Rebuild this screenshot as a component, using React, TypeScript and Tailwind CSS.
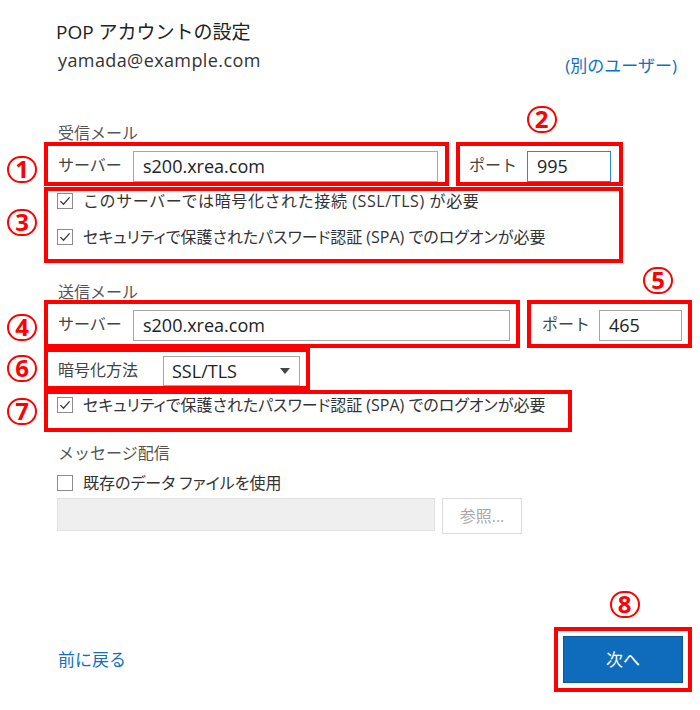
import React from "react";

const RED = "border-4 border-[#ff0000]";

// circled annotation number: a red ellipse with the digit inside
function Num({ n }: { n: string }) {
  return (
    <span className="inline-flex h-[28px] items-center">
      <span className="inline-flex items-center justify-center w-[30px] h-[27px] rounded-full border-2 border-[#ff0000] text-[#ff0000] text-[24px] leading-none font-bold font-['Noto_Sans',sans-serif]">
        {n}
      </span>
    </span>
  );
}

function Check({ checked }: { checked: boolean }) {
  return (
    <svg width="16" height="16" viewBox="0 0 16 16" className="shrink-0">
      <rect x="0.5" y="0.5" width="15" height="15" fill="#fff" stroke="#8c8c8c" />
      {checked && (
        <path d="M3.4 8.1 L6.5 11.3 L12.6 4.4" fill="none" stroke="#3a3a3a" strokeWidth="1.3" />
      )}
    </svg>
  );
}

// palt narrows kana the way the original UI font does; the first row reads wider there
function CheckRow({
  label,
  checked = true,
  palt = true,
}: {
  label: string;
  checked?: boolean;
  palt?: boolean;
}) {
  return (
    <div className="flex items-center h-[16px]">
      <Check checked={checked} />
      <span
        className={`ml-[10px] text-[16px] leading-[16px] text-[#333] whitespace-nowrap ${
          palt ? "[font-feature-settings:'palt']" : "tracking-[0.6px]"
        }`}
      >
        {label}
      </span>
    </div>
  );
}

function TextBox({ value, w, focus = false }: { value: string; w: string; focus?: boolean }) {
  return (
    <div
      className={`${w} h-[31px] flex items-center pl-[9px] bg-white border text-[18px] text-[#222] ${
        focus ? "border-[#2b88d8]" : "border-[#a6a6a6]"
      }`}
    >
      {value}
    </div>
  );
}

export default function App() {
  return (
    <div className="w-[700px] h-[710px] bg-white flex flex-col font-['Open_Sans','Noto_Sans_CJK_JP',sans-serif] text-[#333]">
      {/* header */}
      <div className="pl-[56px] pr-[23px] pt-[22px]">
        <h1 className="h-[20px] text-[19px] leading-[20px] text-[#222] whitespace-nowrap">
          POP アカウントの設定
        </h1>
        <div className="mt-[8px] flex justify-between items-start h-[26px]">
          <span className="pl-[2px] text-[18px] leading-[20px] tracking-[0.4px] text-[#333]">
            yamada@example.com
          </span>
          <a className="mt-[6px] text-[17px] leading-[20px] text-[#1170c4]">(別のユーザー)</a>
        </div>
      </div>

      {/* 受信メール */}
      <div className="flex h-[66px]">
        <div className="w-[456px] pl-[58px] self-end text-[16px] leading-[18px] text-[#555]">
          受信メール
        </div>
        <div className="w-[167px] pt-[29px] pl-[4px] text-center">
          <Num n="2" />
        </div>
      </div>

      <div className="flex h-[44px]">
        <div className="w-[44px] flex justify-center pt-[13px]">
          <Num n="1" />
        </div>
        <div className={`${RED} w-[405px] h-[44px] flex items-start pl-[10px] pt-[5px]`}>
          <span className="w-[75px] text-[16px] leading-[28px] text-[#444]">サーバー</span>
          <TextBox value="s200.xrea.com" w="w-[305px]" />
        </div>
        <div className={`${RED} ml-[7px] w-[167px] h-[44px] flex items-start pl-[9px] pt-[5px]`}>
          <span className="w-[58px] text-[16px] leading-[28px] text-[#444]">ポート</span>
          <TextBox value="995" w="w-[84px]" focus />
        </div>
      </div>

      <div className="flex mt-[1px] h-[76px]">
        <div className="w-[44px] flex justify-center pt-[21px]">
          <Num n="3" />
        </div>
        <div className={`${RED} w-[579px] h-[76px] flex flex-col gap-[20px] pl-[9px] pt-[2px]`}>
          <CheckRow label="このサーバーでは暗号化された接続 (SSL/TLS) が必要" palt={false} />
          <CheckRow label="セキュリティで保護されたパスワード認証 (SPA) でのログオンが必要" />
        </div>
      </div>

      {/* 送信メール */}
      <div className="flex h-[37px]">
        <div className="flex-1 pl-[58px] self-end text-[16px] leading-[16px] text-[#555]">
          送信メール
        </div>
        <div className="w-[30px] mr-[27px] pt-[3px] text-center">
          <Num n="5" />
        </div>
      </div>

      <div className="flex h-[48px]">
        <div className="w-[44px] flex justify-center pt-[13px]">
          <Num n="4" />
        </div>
        <div className={`${RED} w-[476px] h-[48px] flex items-start pl-[10px] pt-[6px]`}>
          <span className="w-[75px] text-[16px] leading-[28px] text-[#444]">サーバー</span>
          <TextBox value="s200.xrea.com" w="w-[377px]" />
        </div>
        <div className={`${RED} ml-[7px] w-[165px] h-[48px] flex items-start pl-[11px] pt-[6px]`}>
          <span className="w-[57px] text-[16px] leading-[28px] text-[#444]">ポート</span>
          <TextBox value="465" w="w-[83px]" />
        </div>
      </div>

      <div className="flex h-[42px]">
        <div className="w-[44px] flex justify-center pt-[6px]">
          <Num n="6" />
        </div>
        <div className={`${RED} w-[266px] h-[42px] flex items-start pl-[10px] pt-[4px]`}>
          <span className="w-[105px] text-[16px] leading-[28px] text-[#444]">暗号化方法</span>
          <div className="w-[137px] h-[30px] border border-[#a6a6a6] bg-white flex items-center justify-between pl-[8px] pr-[9px] text-[18px] text-[#222]">
            <span>SSL/TLS</span>
            <svg width="10" height="6" viewBox="0 0 10 6">
              <polygon points="0,0 10,0 5,6" fill="#444" />
            </svg>
          </div>
        </div>
      </div>

      <div className="flex h-[42px]">
        <div className="w-[44px] flex justify-center pt-[7px]">
          <Num n="7" />
        </div>
        <div className={`${RED} w-[528px] h-[42px] pl-[9px] pt-[3px]`}>
          <CheckRow label="セキュリティで保護されたパスワード認証 (SPA) でのログオンが必要" />
        </div>
      </div>

      {/* メッセージ配信 */}
      <div className="mt-[11px] pl-[58px] text-[16px] leading-[20px] text-[#555]">メッセージ配信</div>
      <div className="mt-[12px] pl-[57px]">
        <CheckRow label="既存のデータ ファイルを使用" checked={false} />
      </div>
      <div className="mt-[7px] pl-[57px] flex items-start">
        <div className="w-[378px] h-[33px] bg-[#efefef] border border-[#e2e2e2]" />
        <button className="ml-[7px] w-[80px] h-[36px] border border-[#dcdcdc] bg-white text-[16px] text-[#a8a8a8]">
          参照...
        </button>
      </div>

      {/* footer */}
      <div className="mt-[56px] flex justify-end pr-[8px]">
        <div className="w-[138px] text-center h-[28px] pl-[3px]">
          <Num n="8" />
        </div>
      </div>
      <div className="mt-[9px] flex justify-between items-center pr-[8px]">
        <a className="pl-[58px] text-[17px] leading-[20px] text-[#1170c4]">前に戻る</a>
        <div className={`${RED} w-[138px] h-[65px] p-[5px]`}>
          <button className="w-full h-full bg-[#0f6cbd] border border-[#0b5897] text-white text-[17px]">
            次へ
          </button>
        </div>
      </div>
    </div>
  );
}
